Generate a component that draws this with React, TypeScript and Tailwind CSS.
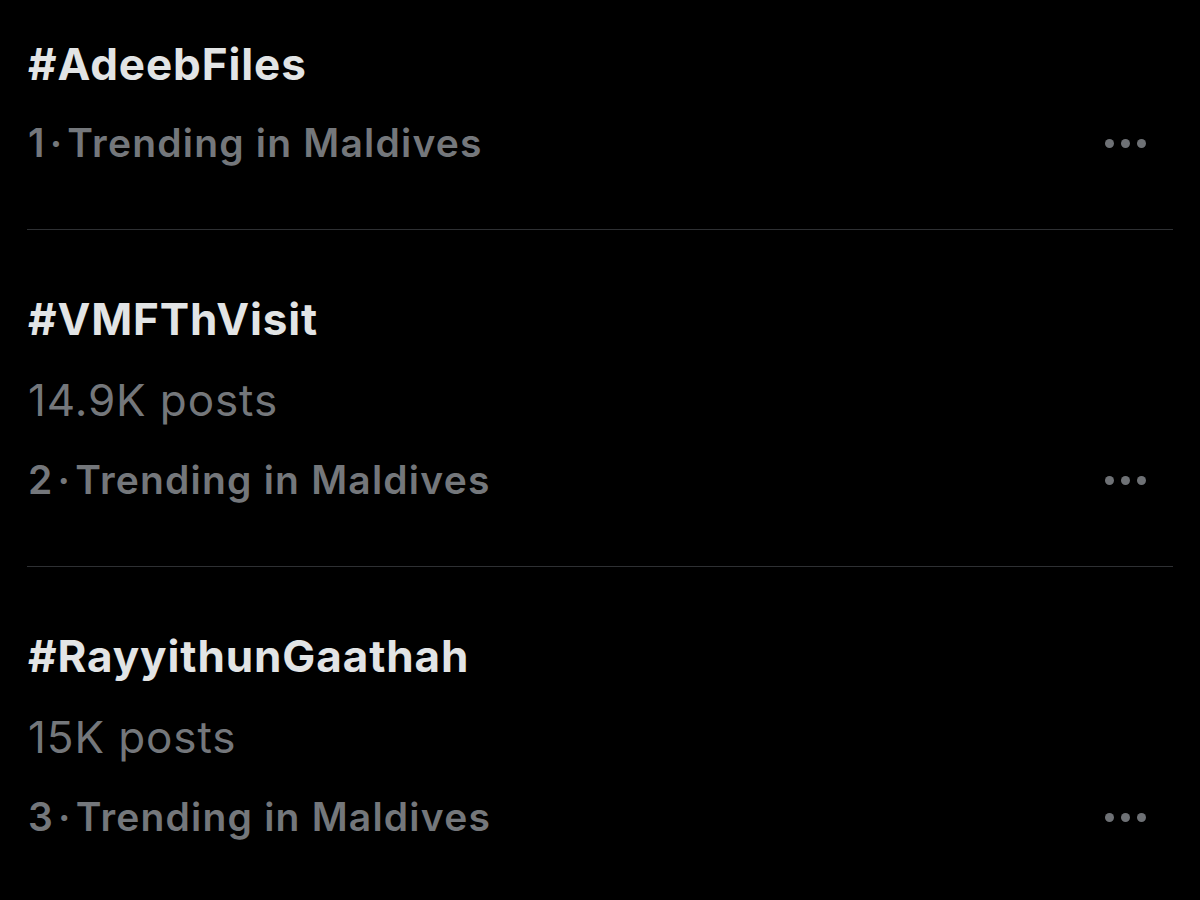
import React from "react";

const items = [
  { tag: "#AdeebFiles", posts: null, rank: "1" },
  { tag: "#VMFThVisit", posts: "14.9K posts", rank: "2" },
  { tag: "#RayyithunGaathah", posts: "15K posts", rank: "3" },
];

function Dots() {
  return (
    <div className="flex items-center gap-[7px] mr-[54px]">
      <span className="block w-[9px] h-[9px] rounded-full bg-[#6e7175]" />
      <span className="block w-[9px] h-[9px] rounded-full bg-[#6e7175]" />
      <span className="block w-[9px] h-[9px] rounded-full bg-[#6e7175]" />
    </div>
  );
}

export default function App() {
  return (
    <div
      className="w-[1200px] h-[900px] bg-black overflow-hidden"
      style={{ fontFamily: "Inter, 'Noto Sans', sans-serif" }}
    >
      {items.map((it, i) => (
        <div key={i}>
          {i > 0 && <div className="mx-[27px] h-[1px] bg-[#2e3033]" />}
          <div className={i === 0 ? "pl-[28px] pt-[25px] pb-[45px]" : "pl-[28px] pt-[48px] pb-[45px]"}>
            <div
              className={
                (i === 0 ? "h-[78px] " : "h-[81px] ") +
                "flex items-center text-[44px] font-bold text-[#e2e4e5] tracking-[0.9px]"
              }
            >
              {it.tag}
            </div>
            {it.posts && (
              <div className="h-[81px] flex items-center text-[44px] font-normal text-[#74777b] tracking-[0.9px]">
                {it.posts}
              </div>
            )}
            <div className="h-[81px] flex items-center justify-between">
              <span className="text-[39px] font-semibold text-[#74777b] tracking-[1.2px]">
                {it.rank}
                <span className="mx-[4px]">·</span>
                Trending in Maldives
              </span>
              <Dots />
            </div>
          </div>
        </div>
      ))}
    </div>
  );
}
